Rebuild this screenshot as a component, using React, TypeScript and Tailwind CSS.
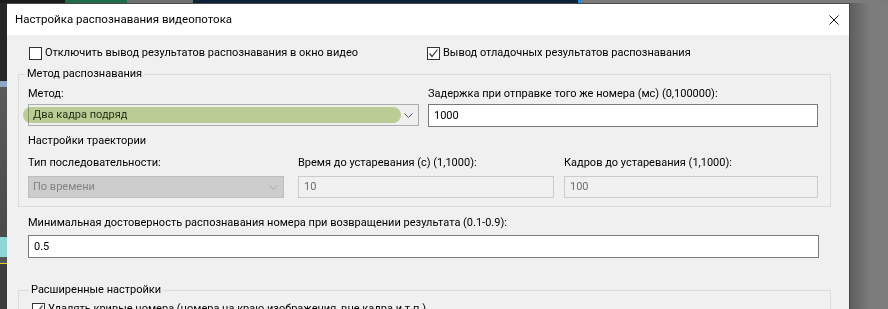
import React from 'react';

const font = { fontFamily: 'Roboto, "Noto Sans", sans-serif' };

function CheckBox({ checked, label, className = '' }: { checked?: boolean; label: string; className?: string }) {
  return (
    <div className={`flex items-center h-[16px] ${className}`}>
      <div className="w-[13px] h-[13px] border border-[#333333] bg-white flex items-center justify-center shrink-0">
        {checked && (
          <svg width="11" height="11" viewBox="0 0 11 11">
            <polyline points="1.5,5.5 4,8.5 9.5,1.5" fill="none" stroke="#333333" strokeWidth="1.2" />
          </svg>
        )}
      </div>
      <span className="ml-[3px] whitespace-nowrap">{label}</span>
    </div>
  );
}

function Chevron({ color }: { color: string }) {
  return (
    <svg width="9" height="5" viewBox="0 0 9 5">
      <polyline points="0.5,0.5 4.5,4.5 8.5,0.5" fill="none" stroke={color} strokeWidth="1" />
    </svg>
  );
}

export default function App() {
  return (
    <div className="w-[888px] h-[309px] overflow-hidden bg-[#7b7b7b] flex flex-col text-[11px] leading-[16px] text-black" style={font}>
      {/* strip of the window behind */}
      <div className="h-[3px] flex shrink-0">
        <div className="w-[65px] bg-[#1b1b1b]" />
        <div className="w-[62px] bg-[#1f6b4a]" />
        <div className="w-[66px] bg-[#6f6f6f]" />
        <div className="w-[385px] bg-[#0d2236]" />
        <div className="w-[3px] bg-[#1e90d8]" />
        <div className="flex-1 bg-[#7b7b7b]" />
      </div>

      <div className="flex flex-1 min-h-0">
        {/* video behind */}
        <div className="w-[7px] flex flex-col bg-[#4d4d4d]">
          <div className="h-[78px] bg-[#262626]" />
          <div className="h-[6px] bg-[#8fa7c7]" />
          <div className="h-[150px] bg-gradient-to-b from-[#5a5a5a] to-[#4a4a4a]" />
          <div className="h-[20px] bg-[#8cd7d6]" />
          <div className="h-[6px] bg-[#555555]" />
          <div className="h-[1px] bg-[#e0d020]" />
          <div className="flex-1 bg-[#3c3c3c]" />
        </div>

        {/* dialog */}
        <div className="w-[843px] flex flex-col border-t border-r border-[#4a4a4a] bg-[#f0f0f0]">
          <div className="h-[31px] bg-white flex items-center justify-between pl-[8px] pr-[10px] shrink-0">
            <span className="text-[11.5px] mt-[-2px]">Настройка распознавания видеопотока</span>
            <svg width="10" height="10" viewBox="0 0 10 10">
              <path d="M0.5 0.5 L9.5 9.5 M9.5 0.5 L0.5 9.5" stroke="#111" strokeWidth="1" />
            </svg>
          </div>

          <div className="pl-[11px] pt-[10px] flex flex-col">
            <div className="flex">
              <CheckBox label="Отключить вывод результатов распознавания в окно видео" className="ml-[11px] w-[398px]" />
              <CheckBox checked label="Вывод отладочных результатов распознавания" />
            </div>

            <fieldset className="mt-[5px] w-[813px] border border-[#dcdcdc] pl-[9px] pr-[12px] pt-[4px] pb-[8px]">
              <legend className="-ml-[3px] px-[2px]">Метод распознавания</legend>
              <div className="flex gap-[9px]">
                <div className="w-[391px] flex flex-col">
                  <span>Метод:</span>
                  <div className="relative mt-[2px] h-[22px] border border-[#adadad] bg-[#efefef] flex items-center justify-between pl-[4px] pr-[5px]">
                    <span className="text-[#2e3a24]">Два кадра подряд</span>
                    <Chevron color="#555555" />
                    <div className="absolute left-[-6px] top-[2px] w-[378px] h-[16px] rounded-full bg-[#c8da9f] mix-blend-multiply" />
                  </div>
                </div>
                <div className="flex-1 flex flex-col">
                  <span>Задержка при отправке того же номера (мс) (0,100000):</span>
                  <div className="mt-[2px] h-[23px] border border-[#7a7a7a] bg-white flex items-center pl-[5px]">1000</div>
                </div>
              </div>

              <div className="mt-[6px]">Настройки траектории</div>

              <div className="mt-[6px] flex">
                <div className="w-[256px] flex flex-col">
                  <span>Тип последовательности:</span>
                  <div className="mt-[5px] h-[22px] border border-[#bfbfbf] bg-[#cccccc] flex items-center justify-between pl-[4px] pr-[5px]">
                    <span className="text-[#838383]">По времени</span>
                    <Chevron color="#a6a6a6" />
                  </div>
                </div>
                <div className="ml-[14px] w-[256px] flex flex-col">
                  <span>Время до устаревания (с) (1,1000):</span>
                  <div className="mt-[5px] h-[22px] border border-[#cccccc] bg-[#f0f0f0] flex items-center pl-[5px] text-[#6d6d6d]">10</div>
                </div>
                <div className="ml-[10px] flex-1 flex flex-col">
                  <span>Кадров до устаревания (1,1000):</span>
                  <div className="mt-[5px] h-[22px] border border-[#cccccc] bg-[#f0f0f0] flex items-center pl-[5px] text-[#6d6d6d]">100</div>
                </div>
              </div>
            </fieldset>

            <div className="ml-[10px] w-[791px] flex flex-col">
              <span className="mt-[8px]">Минимальная достоверность распознавания номера при возвращении результата (0.1-0.9):</span>
              <div className="mt-[4px] h-[23px] border border-[#7a7a7a] bg-white flex items-center pl-[5px]">0.5</div>
            </div>

            <fieldset className="mt-[24px] w-[813px] border border-[#dcdcdc] pl-[13px] pr-[12px] pt-[3px] pb-[8px]">
              <legend className="-ml-[3px] px-[2px]">Расширенные настройки</legend>
              <CheckBox checked label="Удалять кривые номера (номера на краю изображения, вне кадра и т.п.)" />
            </fieldset>
          </div>
        </div>

        {/* desktop behind, shadow */}
        <div className="flex-1 bg-gradient-to-r from-[#5e5e5e] via-[#7b7b7b] to-[#7d7d7d]" />
      </div>
    </div>
  );
}
